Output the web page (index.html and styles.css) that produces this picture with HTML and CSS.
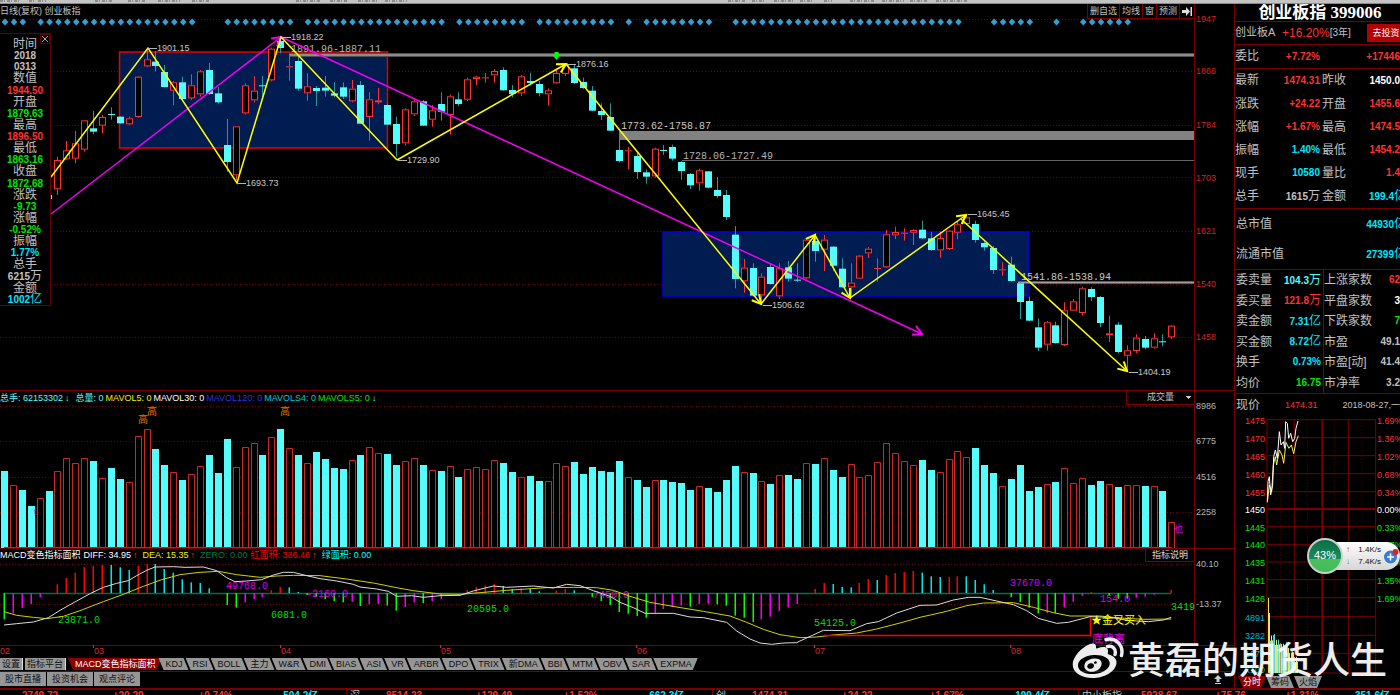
FILE: index.html
```html
<!DOCTYPE html>
<html lang="zh-CN">
<head>
<meta charset="utf-8">
<title>创业板指 399006</title>
<link rel="stylesheet" href="styles.css">
</head>
<body>
<div class="toolbar"><svg class="toolbar-marks" width="1000" height="3" aria-hidden="true"><path d="M0 1h20M29 1h6M38 1h8M95 1h18M128 1h18M158 1h22M192 1h18M296 1h24M330 1h18M358 1h20M385 1h22M728 1h18M752 1h14M774 1h20M800 1h14M824 1h8M850 1h24M882 1h22M910 1h18M936 1h32"/></svg></div>
<div class="workspace">
<main class="charts">
  <section class="kline">
    <header class="bar bar-top">
      <h2 class="chart-name">日线(复权) 创业板指</h2>
      <div class="chart-tools">
        <button type="button">删自选</button><button type="button">均线</button><button type="button">窗</button><button type="button">预测</button><button type="button" aria-label="移到最右"><svg width="10" height="9" viewBox="0 0 10 9"><path d="M0 3h4V0l4 4.500-4 4.500V6H0zM8.500 0H10v9H8.500z" fill="#ddd"/></svg></button>
      </div>
    </header>
    <svg class="plot" id="kline" viewBox="0 19 1234 371"></svg>
    <aside class="tip">
      <button type="button" class="tip-close" aria-label="关闭"><svg width="8" height="8" viewBox="0 0 8 8"><path d="M1 1l6 6M7 1l-6 6" stroke="#aaa"/></svg></button>
      <dl>
        <dt>时间</dt><dd>2018</dd><dd>0313</dd>
        <dt>数值</dt><dd class="up">1944.50</dd>
        <dt>开盘</dt><dd class="down">1879.63</dd>
        <dt>最高</dt><dd class="up">1896.50</dd>
        <dt>最低</dt><dd class="down">1863.16</dd>
        <dt>收盘</dt><dd class="down">1872.68</dd>
        <dt>涨跌</dt><dd class="down">-9.73</dd>
        <dt>涨幅</dt><dd class="down">-0.52%</dd>
        <dt>振幅</dt><dd class="info">1.77%</dd>
        <dt>总手</dt><dd>6215<i>万</i></dd>
        <dt>金额</dt><dd class="info">1002<i>亿</i></dd>
      </dl>
    </aside>
  </section>

  <section class="volume">
    <header class="bar bar-vol">
      <p class="legend"><span class="teal first">总手: 62153302<b>↓</b></span><span class="teal">总量: 0</span><span class="yellow">MAVOL5: 0</span><span class="white">MAVOL30: 0</span><span class="blue">MAVOL120: 0</span><span class="cyan">MAVOLS4: 0</span><span class="green">MAVOLS5: 0<b class="teal">↓</b></span></p>
      <select class="vol-select" aria-label="副图指标"><option>成交量</option></select>
    </header>
    <svg class="plot" id="volume" viewBox="0 405 1234 143"></svg>
  </section>

  <section class="macd">
    <header class="bar bar-macd">
      <p class="legend wide"><span class="white">MACD变色指标面积</span><span class="white">DIFF: 34.95<b class="up">↑</b></span><span class="yellow">DEA: 15.35<b class="up">↑</b></span><span class="dim">ZERO: 0.00</span><span class="red">红面积: 386.46<b class="up">↑</b></span><span class="aqua">绿面积: 0.00</span></p>
      <button type="button" class="help">指标说明</button>
    </header>
    <svg class="plot" id="macd" viewBox="0 562 1234 95"></svg>
  </section>

  <nav class="tabs">
    <button type="button" class="flat">设置</button><button type="button" class="flat">指标平台</button><button type="button" class="tab on">MACD变色指标面积</button><button type="button" class="tab">KDJ</button><button type="button" class="tab">RSI</button><button type="button" class="tab">BOLL</button><button type="button" class="tab">主力</button><button type="button" class="tab">W&amp;R</button><button type="button" class="tab">DMI</button><button type="button" class="tab">BIAS</button><button type="button" class="tab">ASI</button><button type="button" class="tab">VR</button><button type="button" class="tab">ARBR</button><button type="button" class="tab">DPO</button><button type="button" class="tab">TRIX</button><button type="button" class="tab">新DMA</button><button type="button" class="tab">BBI</button><button type="button" class="tab">MTM</button><button type="button" class="tab">OBV</button><button type="button" class="tab">SAR</button><button type="button" class="tab last">EXPMA</button>
  </nav>
  <nav class="links">
    <button type="button">股市直播</button><button type="button">投资机会</button><button type="button">观点评论</button>
    <svg class="raise" width="8" height="9" viewBox="0 0 8 9" aria-hidden="true"><path d="M4 0l4 4H5.500v3h-3V4H0zM1 8h6v1H1z" fill="#ccc"/></svg>
  </nav>
</main>

<aside class="quote">
  <h1>创业板指 399006</h1>
  <div class="fund"><span class="lab">创业板A</span><span class="rate">+16.20%</span><span class="term">[3年]</span><button type="button">去投资</button></div>
  <dl class="pair one"><dt>委比</dt><dd class="up">+7.72%</dd><dt></dt><dd class="up">+17446</dd></dl>
  <dl class="pair six">
    <dt>最新</dt><dd class="up">1474.31</dd><dt>昨收</dt><dd class="white">1450.0</dd>
    <dt>涨跌</dt><dd class="up">+24.22</dd><dt>开盘</dt><dd class="up">1455.6</dd>
    <dt>涨幅</dt><dd class="up">+1.67%</dd><dt>最高</dt><dd class="up">1474.5</dd>
    <dt>振幅</dt><dd class="info">1.40%</dd><dt>最低</dt><dd class="up">1454.2</dd>
    <dt>现手</dt><dd class="info">10580</dd><dt>量比</dt><dd class="up">1.4</dd>
    <dt>总手</dt><dd>1615<i>万</i></dd><dt>金额</dt><dd class="info cut">199.4<i>亿</i></dd>
  </dl>
  <dl class="caps"><dt>总市值</dt><dd class="info cut">44930<i>亿</i></dd><dt>流通市值</dt><dd class="info cut">27399<i>亿</i></dd></dl>
  <div class="depth">
    <dl>
      <dt>委卖量</dt><dd class="teal">104.3<i>万</i></dd>
      <dt>委买量</dt><dd class="up">121.8<i>万</i></dd>
      <dt>卖金额</dt><dd class="info">7.31<i>亿</i></dd>
      <dt>买金额</dt><dd class="info">8.72<i>亿</i></dd>
      <dt>换手</dt><dd class="info">0.73%</dd>
      <dt>均价</dt><dd class="down">16.75</dd>
    </dl>
    <dl>
      <dt>上涨家数</dt><dd class="up">62</dd>
      <dt>平盘家数</dt><dd class="white">3</dd>
      <dt>下跌家数</dt><dd class="down">7</dd>
      <dt>市盈</dt><dd>49.1</dd>
      <dt>市盈[动]</dt><dd>41.4</dd>
      <dt>市净率</dt><dd>3.2</dd>
    </dl>
  </div>
  <div class="now"><span class="lab">现价</span><span class="up">1474.31</span><span>2018-08-27,一</span></div>
  <svg class="plot" id="intraday" viewBox="1235 416 165 258"></svg>
  <nav class="tabs side"><button type="button" class="tab on">分时</button><button type="button" class="tab">筹码</button><button type="button" class="tab last">火焰</button></nav>
</aside>
</div>

<footer class="ticker">
  <div class="idx i1"><span></span><b>2749.72</b><b>+20.29</b><b>+0.74%</b><b class="info">504.2亿</b></div>
  <div class="idx i2"><span>深</span><b>8514.23</b><b>+129.49</b><b>+1.52%</b><b class="info">662.3亿</b></div>
  <div class="idx i2"><span>创</span><b>1474.31</b><b>+24.22</b><b>+1.67%</b><b class="info">199.4亿</b></div>
  <div class="idx i4"><span>中小板指</span><b>5928.67</b><b>+75.76</b><b>+1.31%</b><b class="info">351.6亿</b></div>
</footer>

<div class="netball">
  <div class="pill">
    <div class="speeds"><span><b class="s-up">↑</b>1.4K/s</span><span><b class="s-down">↓</b>7.4K/s</span></div>
    <svg width="17" height="17" viewBox="0 0 17 17" aria-hidden="true"><circle cx="7.500" cy="9" r="6.500" fill="#3a7bd5"/><path d="M7.500 5.500v7M4 9h7" stroke="#fff" stroke-width="1.600"/><circle cx="12.500" cy="4" r="3" fill="#d22"/></svg>
  </div>
  <div class="ball">43%</div>
</div>

<div class="mark">
  <svg width="52" height="42" viewBox="0 0 52 42" aria-hidden="true">
    <path fill="#fff" fill-rule="evenodd" d="M18 7c4-1.500 6.500 0 6 3.500-.1 1 .5 1.200 1.500.8 6-2.300 11-1.500 10.500 3.500-.1 1.300-.8 2.200.8 2.800C41 19 45 21.500 44.500 26 43.500 35 32 41 20.500 41 9 41 .7 35.500.7 27.500.7 20 9 10.500 18 7zM21 18C12 18.800 5.500 23.500 6 29c.5 5.300 7.500 8.800 16.500 8 9-.9 15.700-6 15.200-11.300C37.200 20.500 30 17.200 21 18z"/>
    <path fill="#fff" fill-rule="evenodd" d="M22.500 21.500c5.500-.5 8.300 3 6.700 7.300-1.700 4.800-7.700 7.200-12.700 5.400-4.600-1.700-5.300-5.800-2.500-9.400 2-2.200 5-3.100 8.500-3.300zM17.500 26.500c-1.800.7-2.700 2.500-2 4 .8 1.300 2.800 1.700 4.500.9 1.800-.8 2.500-2.700 1.700-4-.8-1.200-2.600-1.600-4.200-.9zM23 24.500c-.8.3-1.200 1.100-.9 1.700.3.600 1.200.8 1.900.4.700-.3 1-1.100.7-1.700-.3-.5-1-.7-1.700-.4z"/>
    <path d="M34 2.500c9-2.500 18 5 15.500 16M35.500 9.500c5-1.200 9 2.500 7.500 8" fill="none" stroke="#fff" stroke-width="3.400" stroke-linecap="round"/>
  </svg>
  <span>黄磊的期货人生</span>
</div>
<script src="charts.js"></script>
</body>
</html>
```
FILE: styles.css
```css
* { box-sizing: border-box; margin: 0; padding: 0; }
body {
  background: #000;
  color: #c0c0c0;
  font: 9px/1.2 "Liberation Sans", "Noto Sans CJK SC", sans-serif;
  overflow-x: hidden;
  position: relative;
}
button, select { font: inherit; color: inherit; background: none; border: 0; border-radius: 0; white-space: nowrap; }
i { font-style: normal; font-weight: 400; font-size: 12px; }
b { font-weight: 700; }
.up { color: #ff3232; }
.down, .green { color: #00e600; }
.info { color: #00e6ff; }
.teal { color: #54fcfc; }
.cyan { color: #00c8dc; }
.aqua { color: #00ffff; }
.yellow { color: #f0f000; }
.white { color: #fff; }
.blue { color: #3232dc; }
.dim { color: #00783c; }
.red { color: #ff0000; }

.toolbar { height: 4px; background: #c4c4c4; border-bottom: 1px solid #8a8a8a; overflow: hidden; }
.toolbar-marks { display: block; }
.toolbar-marks path { stroke: #555; stroke-width: 1; stroke-dasharray: 3 1 1 2; fill: none; }
.workspace { display: grid; grid-template-columns: minmax(0, 1fr) 166px; border-bottom: 2px solid #780000; }
.charts { min-width: 0; }
.plot { display: block; width: 100%; height: auto; overflow: visible; }
.plot text { white-space: pre; }

.kline { position: relative; }
.bar { display: flex; justify-content: space-between; align-items: center; padding-right: 39px; }
.bar-top { height: 15px; }
.chart-name { font-size: 9px; font-weight: 400; }
.chart-tools { display: flex; height: 15px; border-bottom: 1px solid #780000; border-right: 1px solid #780000; }
.chart-tools button { border-left: 1px solid #780000; padding: 0 2px; line-height: 14px; display: flex; align-items: center; }
.tip {
  position: absolute; left: 0; top: 29px; width: 51px; height: 273px;
  background: #000; border: solid #640000; border-width: 1px 1px 1px 0;
}
.tip-close { position: absolute; right: 0; top: 0; width: 10px; height: 10px; border: 1px solid #640000; line-height: 0; }
.tip dl { height: 100%; padding: 4px 0 0; display: flex; flex-direction: column; justify-content: space-between; text-align: center; }
.tip dt { font-size: 12px; line-height: 12px; }
.tip dd { font-size: 10px; line-height: 11px; font-weight: 700; }
.tip i { line-height: 11px; }

.volume, .macd { border-top: 1px solid #780000; }
.bar-vol { height: 14px; }
.bar-macd { height: 13px; }
.legend { display: flex; gap: 2px; white-space: nowrap; }
.legend b { padding-left: 2px; }
.first { padding-right: 4px; }
.wide { gap: 3px; }
.wide b { padding-right: 2px; }
.vol-select {
  appearance: none; width: 69px; height: 14px; padding-left: 20px; border: solid #780000; border-width: 0 1px 1px 1px;
  background: linear-gradient(#ccc, #ccc) 59px 5px / 5px 1px no-repeat, linear-gradient(#ccc, #ccc) 60px 6px / 3px 1px no-repeat, linear-gradient(#ccc, #ccc) 61px 7px / 1px 1px no-repeat;
}
.help { width: 50px; height: 13px; border: solid #780000; border-width: 0 1px 1px 1px; color: #ddd; }

.tabs { display: flex; height: 15px; align-items: flex-start; border-bottom: 1px solid #780000; }
.tabs button { height: 12px; line-height: 12px; background: #969696; color: #111; margin-top: 1px; }
.tabs .flat { padding: 0 2px; margin-right: 2px; border-right: 1px solid #ddd; }
.tabs .tab { padding: 0 6px 0 7px; margin-right: -3px; clip-path: polygon(0 0, calc(100% - 5px) 0, 100% 100%, 5px 100%); }
.tabs .last { clip-path: polygon(0 0, 100% 0, calc(100% - 5px) 100%, 5px 100%); }
.tabs .on { background: #8c0000; color: #fff; clip-path: polygon(0 0, 100% 0, calc(100% - 5px) 100%, 5px 100%); }
.links { display: flex; height: 15px; align-items: flex-start; }
.links button { width: 46px; height: 14px; margin-right: 1px; background: #969696; color: #111; }
.raise { margin: 3px 12px 0 auto; }

.quote { border-left: 1px solid #780000; overflow: hidden; min-width: 0; }
.quote > * { border-bottom: 1px solid #780000; }
.quote h1 { height: 18px; font: 700 17px/17px "Liberation Serif", "Noto Sans CJK SC", serif; color: #fff; text-align: center; white-space: nowrap; padding-left: 5px; }
.quote dt, .lab { font-size: 12px; white-space: nowrap; }
.quote dd { font-size: 10px; font-weight: 700; text-align: right; white-space: nowrap; }
.quote i { line-height: 12px; }
.quote .cut { margin-right: -6px; }
.fund { display: flex; align-items: center; height: 23px; }
.fund .lab { width: 47px; font-size: 11px; }
.rate { color: #ff3232; font-size: 12px; }
.term { font-size: 10px; flex: 1; }
.fund button { background: #b40000; color: #fff; height: 18px; padding: 0 0 0 5px; width: 33px; }
.pair { display: grid; grid-template-columns: 24px 61px 28px minmax(0, 1fr); align-items: center; }
.pair dt:nth-of-type(even) { padding-left: 2px; }
.one { height: 24px; }
.six { height: 140px; }
.caps { display: grid; grid-template-columns: auto 1fr; align-items: center; height: 61px; padding-left: 1px; }
.depth { display: grid; grid-template-columns: 88px minmax(0, 1fr); height: 124px; }
.depth dl { display: grid; grid-template-columns: auto 1fr; align-items: center; padding: 0 2px 0 1px; }
.depth dl + dl { border-left: 1px solid #780000; padding: 0; }
.quote .now { display: flex; align-items: center; justify-content: space-between; height: 22px; border: 0; padding-left: 1px; white-space: nowrap; }
.quote .plot { border: 0; }
.quote .side { height: 13px; border: 0; padding-left: 3px; margin-top: 1px; }
.side .tab { margin-right: 0; padding: 0 5px; }

.ticker { display: grid; grid-template-columns: 347fr 366fr 366fr 321fr; height: 7px; overflow: hidden; line-height: 12px; font-size: 10px; color: #c0c0c0; }
.idx { display: grid; white-space: nowrap; border-right: 1px solid #780000; padding-left: 3px; }
.idx b { color: #ff3232; }
.idx .info { color: #00e6ff; }
.i1 { grid-template-columns: 19fr 91fr 86fr 85fr 63fr; }
.i2 { grid-template-columns: 36fr 90fr 88fr 86fr 63fr; }
.i4 { grid-template-columns: 59fr 74fr 70fr 70fr 45fr; border-right: 0; }

.netball { position: absolute; right: 0; top: 538px; width: 93px; height: 36px; }
.ball {
  position: absolute; left: 0; top: 0; width: 36px; height: 36px; border-radius: 50%;
  border: 2px solid #c8d2cc; background: linear-gradient(#0a6e46 0, #1d8a58 58%, #48c25a 58%, #46b95a 100%);
  color: #fff; font-size: 11px; line-height: 31px; text-align: center;
}
.pill {
  position: absolute; left: 18px; right: 0; top: 4px; height: 28px; border-radius: 0 14px 14px 0;
  background: linear-gradient(#fff, #d6d6d6); display: flex; align-items: center; justify-content: flex-end;
}
.speeds { display: flex; flex-direction: column; gap: 2px; font-size: 8px; line-height: 10px; color: #111; width: 35px; margin-right: 2px; }
.speeds span { display: flex; justify-content: space-between; }
.s-up { color: #e03020; }
.s-down { color: #2a9a50; }

.mark { position: absolute; right: 13px; top: 636px; display: flex; align-items: center; gap: 4px; color: #fff; opacity: .93; font: 500 37px/44px "Noto Sans CJK SC", sans-serif; white-space: nowrap; }
```
FILE: charts.js
```js
const STEP = 8.911;
const cx = i => 4 + STEP * i;
const RED = '#ff3232', CYAN = '#54fcfc', GRID = '#6e0000';
const rect = (x, y, w, h, fill, stroke, sw = 1) =>
  `<rect x="${x}" y="${y}" width="${w}" height="${h}" fill="${fill}"${stroke ? ` stroke="${stroke}" stroke-width="${sw}"` : ''}/>`;
const line = (x1, y1, x2, y2, c, w = 1, dash = '') =>
  `<path d="M${x1} ${y1}L${x2} ${y2}" stroke="${c}" stroke-width="${w}"${dash ? ` stroke-dasharray="${dash}"` : ''} fill="none"/>`;
const text = (x, y, s, c, size = 9, extra = '') =>
  `<text x="${x}" y="${y}" fill="${c}" font-size="${size}" ${extra}>${s}</text>`;
const MONO = 'font-family="Liberation Mono, monospace"';
const poly = (pts, c, w = 1) => `<polyline points="${pts}" fill="none" stroke="${c}" stroke-width="${w}"/>`;

/* rows: colour, high, body top, body bottom, low; three units to the pixel */
const candles = `c585 585 597 597|r470 480 568 585|r423 451 478 480|r393 430 476 490|r360 361 449 455|c333 385 395 403|r345 351 377 400|c322 342 344 359|c349 350 370 371|r350 355 373 376|r228 230 351 353|r147 178 199 202|c153 185 198 215|c195 216 261 262|r243 247 272 316|c230 247 297 302|r223 256 295 300|r210 214 283 290|c189 210 282 284|c262 280 307 311|c357 435 486 515|r378 379 526 540|r250 256 340 344|r229 272 301 307|c228 256 258 300|r143 146 241 244|c110 123 144 160|r165 199 202 242|c165 183 266 272|r220 259 280 302|c258 264 273 318|c228 263 272 290|c247 280 287 292|c247 262 290 297|r240 266 304 307|c243 255 371 372|r277 298 351 422|r264 301 307 313|c310 315 374 375|c350 372 432 470|r325 328 430 437|r298 304 343 348|c300 304 377 378|r315 331 359 380|c277 312 335 362|r284 289 345 404|c277 298 312 318|r233 238 299 303|r227 230 237 255|r219 232 234 248|r207 213 226 248|c202 210 271 272|c255 270 282 292|r225 229 280 288|c218 243 249 256|c243 252 279 289|r265 271 283 317|r205 219 250 252|r190 193 222 228|c191 205 249 252|c233 246 264 267|c258 272 332 333|c310 333 345 360|c310 351 392 393|c392 450 483 487|r441 451 453 507|c459 468 516 537|c508 517 530 551|r443 446 529 533|c435 450 452 465|c434 441 476 482|c484 486 513 539|c519 522 556 567|r506 511 550 572|c513 514 563 565|c531 570 588 594|c570 585 651 660|c678 704 837 865|r777 803 844 878|c790 804 887 890|r820 830 886 912|c790 801 852 853|r790 805 889 897|c783 802 836 845|c790 839 841 846|r715 719 835 838|c703 723 753 785|r705 719 749 813|c739 740 797 812|c775 806 862 863|r790 848 862 890|r765 767 836 837|r741 746 760 774|r775 804 806 845|r690 703 802 804|r680 696 706 717|r685 698 700 722|r688 690 698 735|c662 689 715 717|c695 715 750 752|r695 714 751 773|r690 692 747 750|r662 673 698 718|r643 652 672 675|c662 672 720 728|c725 729 742 752|c738 744 810 822|r787 808 811 827|c770 794 843 845|c843 850 906 957|c890 903 962 963|c955 982 1043 1053|r963 967 1034 1052|c965 976 1029 1031|r907 931 1035 1038|r897 904 932 933|r861 865 939 946|c862 867 891 903|c888 891 969 981|r947 1000 1006 1026|c966 974 1056 1061|r1036 1051 1067 1115|r1003 1013 1053 1059|c1008 1017 1043 1048|r1000 1015 1043 1046|c1003 1024 1026 1038|r975 977 1012 1017`
  .split('|').map(s => [s[0], ...s.slice(1).split(' ').map(v => v / 3)]);

const axis = rows => rows.map(([y, s, c]) => text(1196, y + 3, s, c)).join('');
const dots = (ys, x2 = 1194) => ys.map(y => line(0, y, x2, y, GRID, 1, '1 2')).join('');
const frame = (y1, y2) => line(1194.5, y1, 1194.5, y2, '#780000');

function arrow(x1, y1, x2, y2, c) {
  const a = Math.atan2(y2 - y1, x2 - x1);
  const p = d => `${x2 - 10 * Math.cos(a + d)},${y2 - 10 * Math.sin(a + d)}`;
  return line(x1, y1, x2, y2, c, 1.5) + poly(`${p(.5)} ${x2},${y2} ${p(-.5)}`, c, 2);
}

function drawKline() {
  let s = dots([19.5, 71.5, 125.5, 177.5, 231.5, 284.5, 337.5]) + frame(19, 390);
  s += axis([[19, 1947], [71, 1866], [125, 1784], [178, 1703], [231, 1621], [284, 1540], [337, 1458]].map(r => [...r, '#d22323']));
  const runs = [[0, 2], [4, 21], [25, 32], [34, 49], [51, 58], [60, 68], [70, 70], [72, 79], [82, 107], [111, 115], [118, 118], [121, 126]];
  for (const [a, b] of runs) for (let i = a; i <= b; i++) {
    const x = cx(i) + 1;
    s += `<path d="M${x} 18.500l3.300 3.500l-3.300 3.500l-3.300-3.500z" fill="#32a0d2"/>`;
  }
  s += rect(119.5, 52, 268, 96, '#001c50', '#e60000', 1.5) + rect(663, 232, 366, 64, '#001c50', '#0000e6', 1.5);
  s += rect(289, 53, 905, 4, '#505050') + rect(289, 54, 905, 2, '#8c8c8c') + rect(619, 131, 575, 9, '#828282') +
    line(682, 160.5, 1194, 160.5, '#646464') + rect(1018, 281, 176, 3, '#5a5a5a') + rect(1018, 282, 176, 1, '#a0a0a0');
  s += text(291, 52, '1891.96-1887.11', '#b4b4b4', 10, MONO) + text(621, 129, '1773.62-1758.87', '#c8c8c8', 10, MONO) +
    text(683, 159, '1728.06-1727.49', '#b4b4b4', 10, MONO) + text(1021, 280, '1541.86-1538.94', '#c8c8c8', 10, MONO);
  candles.forEach(([k, hi, top, bot, lo], n) => {
    const x = Math.round(cx(n + 5)) + .5, h = bot - top;
    if (n === 0) { s += rect(51, hi, 1, 4, CYAN); return; }
    if (k === 'c') {
      s += line(x, hi, x, lo, '#2d9696') + rect(x - 3.5, top, 7, Math.max(h, 1), CYAN);
    } else {
      s += line(x, hi, x, top, RED) + line(x, bot, x, lo, RED);
      s += h < 2 ? rect(x - 3.5, top, 7, 1, RED) : rect(x - 3, top + .5, 6, Math.max(h - 1, 1), '#000', RED);
    }
  });
  s += arrow(51, 214, 281, 37, '#f000f0') + arrow(281, 37, 922, 334, '#f000f0');
  s += poly('51,177 148,48 237,183 281,37 397,160', '#ffff00', 1.5);
  s += arrow(397, 160, 566, 64, '#ffff00') + arrow(566, 64, 761, 304, '#ffff00') + arrow(761, 304, 815, 235, '#ffff00') +
    arrow(815, 235, 850, 298, '#ffff00') + arrow(850, 298, 966, 215, '#ffff00') + arrow(961, 219, 1127, 371, '#ffff00');
  for (const [x, y, v] of [[157, 48, '1901.15'], [291, 37, '1918.22'], [246, 183, '1693.73'], [407, 160, '1729.90'], [576, 64, '1876.16'], [772, 305, '1506.62'], [977, 214, '1645.45'], [1138, 372, '1404.19']])
    s += line(x - 9, y + .5, x, y + .5, '#b4b4b4') + text(x, y + 3, v, '#c8c8c8');
  s += '<path d="M554.500 52h4v3h2l-4 5-4-5h2z" fill="#00ff00"/>';
  document.getElementById('kline').innerHTML = s;
}

const volumes = 'c258 r300 c315 c364 r338 c319 r258 r220 r235 r220 c228 r280 c249 c282 r292 r154 r133 c193 c241 r262 c286 r268 r244 c210 c264 c162 r247 r187 r175 c210 r156 c132 r190 c210 r234 c202 c222 c249 c253 r226 c210 r187 r205 c208 c240 r228 r220 c241 r256 c259 r244 c276 r252 r247 r252 r226 c235 c262 r277 c273 c288 r289 r235 r243 c231 c267 c246 c259 c262 c228 r277 c285 c306 r286 c285 c292 c295 c316 r304 c309 c320 c285 c243 r260 c264 r287 c297 r271 c270 c282 r234 c237 r220 c255 c277 r238 r277 r269 r232 r175 r205 r229 r241 c226 c255 r262 r223 r199 r217 c190 c241 c264 r304 c282 c240 c318 c306 r296 c292 r250 r295 r280 c300 c289 r296 c306 r301 r301 c304 r304 c319 r412'.split(' ');

function drawVolume() {
  let s = dots([406.5, 441.5, 477.5, 512.5]) + frame(405, 548);
  s += axis([[406, 8986, '#b4b4b4'], [441, 6775, '#b4b4b4'], [477, 4516, '#b4b4b4'], [512, 2258, '#b4b4b4']]);
  volumes.forEach((v, i) => {
    const x = Math.round(cx(i)) + .5, y = Math.round(385 + v.slice(1) / 3);
    s += v[0] === 'c' ? rect(x - 3.5, y, 7, 548 - y, CYAN)
      : `<path d="M${x - 3} 548V${y + .5}h6V548" fill="#000" stroke="#c82828"/>`;
  });
  s += line(4, 547.5, 1172, 547.5, '#008c00');
  s += text(138, 423, '高', '#e67800', 10) + text(147, 415, '高', '#e67800', 10) + text(280, 415, '高', '#e67800', 10) +
    text(1174, 532, '也', '#e600e6', 9) + text(34, 515, 't', '#c800c8', 9);
  document.getElementById('volume').innerHTML = s;
}

const macdBars = 'g703 m685 m669 m657 m636 - r598 r579 r563 r546 r543 r540 c540 c547 c555 r543 r537 c537 c552 c563 c583 c592 c594 c610 - g660 g668 m652 m642 m636 r616 r606 c607 c621 g630 g636 g642 g648 g652 m650 g663 m658 m657 g662 g677 m666 m652 g654 m648 m642 - - r615 r606 r601 r597 c603 c612 r610 c612 c619 - r617 r612 c616 - g636 g648 g660 g681 g686 g693 g698 m684 m672 m666 m662 g665 m657 m656 g658 g662 g692 g698 g711 m703 m695 m678 m667 m657 m626 r612 r594 c597 c606 c607 r594 r582 c585 r570 r564 r561 r558 c563 c574 c576 r576 r574 c574 c585 c598 c615 - g636 g651 g668 g685 m684 g684 m667 m650 m632 r621 - g630 g641 g640 m638 m635 m629 - r615'.split(' ');
const diff = '12,720 50,716 100,711 145,698 180,676 230,648 270,626 310,607 350,595 385,587 410,572 440,556 465,546 520,545 555,547 610,546 650,557 680,578 705,590 740,588 785,584 820,570 850,562 880,562 920,572 960,581 1010,588 1060,598 1080,606 1130,612 1165,619 1190,634 1235,632 1270,637 1320,632 1380,631 1420,618 1480,603 1520,607 1600,603 1660,609 1700,598 1740,602 1780,617 1830,634 1860,652 1900,668 1935,685 2020,685 2070,696 2110,698 2180,712 2210,738 2250,762 2280,774 2315,778 2350,774 2390,773 2400,768 2435,752 2470,736 2550,737 2600,716 2635,710 2690,684 2760,661 2810,660 2860,645 2905,637 2940,637 2990,648 3040,659 3080,677 3115,700 3170,715 3205,712 3270,695 3330,697 3390,707 3445,710 3490,705 3514,697';
const dea = '12,680 50,691 100,697 140,701 190,694 240,677 310,650 370,628 430,604 485,584 540,569 600,562 655,559 710,569 780,577 830,573 880,571 960,572 1040,582 1120,594 1200,610 1240,617 1320,627 1380,628 1440,623 1520,616 1640,608 1720,607 1790,608 1840,616 1890,634 1950,652 2030,666 2110,679 2190,693 2240,712 2290,733 2340,749 2400,758 2450,756 2500,750 2570,744 2630,732 2700,714 2760,697 2840,679 2900,662 2950,654 3040,653 3100,667 3160,683 3210,693 3300,693 3360,699 3430,703 3514,702';
const thirds = (pts, x0) => pts.split(' ').map(p => { const [x, y] = p.split(','); return `${x0 + x / 3},${385 + y / 3}`; }).join(' ');

function drawMacd() {
  let s = dots([564.5, 604.5]) + frame(562, 645) + line(0, 645.5, 1234, 645.5, '#780000');
  s += axis([[564, '40.10', '#b4b4b4'], [604, '-13.37', '#b4b4b4']]);
  s += line(4, 593.5, 1171, 593.5, '#006e46', 1.5);
  const tint = { g: '#00ff00', m: '#f000f0', r: '#ff0000', c: '#00e6e6' };
  macdBars.forEach((v, i) => {
    if (v === '-') return;
    const x = Math.round(cx(i)), y = 385 + v.slice(1) / 3;
    s += rect(x - .5, Math.min(y, 593), 1.5, Math.abs(y - 593), tint[v[0]]);
  });
  for (const [x, y, v, c] of [[58, 623, '23871.0', 'g'], [226, 589, '49768.0', 'm'], [271, 618, '6081.0', 'g'], [306, 597, '-2160.0', 'm'], [467, 612, '20595.0', 'g'], [593, 598, '7450.0', 'm'], [814, 626, '54125.0', 'g'], [1010, 586, '37670.0', 'm'], [1100, 602, '154.0', 'm'], [1171, 610, '3419', 'g']])
    s += text(x, y, v, c === 'g' ? '#00dc00' : '#dc00dc', 10, MONO);
  s += poly(thirds(dea, 0), '#d2d200') + poly(thirds(diff, 0), '#dcdcdc');
  s += poly('824,635.5 1090.5,635.5 1090.5,617', '#ff0000', 1.5);
  s += text(1091, 624, '★金叉买入', '#ffff00', 11) + text(1092, 643, '底背离', '#e600e6', 11);
  for (const [x, m] of [[0, '02'], [94, '03'], [281, '04'], [441, '05'], [637, '06'], [815, '07'], [1011, '08']])
    s += text(x, 654, m, '#dc2828') + (x ? line(x - .5, 645, x - .5, 648, '#dc2828') : '');
  document.getElementById('macd').innerHTML = s;
}

function drawIntraday() {
  const X = u => 1190 + u / 3, Y = v => 385 + v / 3;
  const ys = [104, 158, 212, 266, 320, 372, 425, 478, 531, 584, 638, 695, 751, 805, 864];
  let s = ys.map((v, i) => line(X(231), Y(v), X(557), Y(v), '#780000', i === 5 ? 2 : 1)).join('');
  for (const u of [231, 313, 397, 475, 557]) s += line(X(u), Y(104), X(u), Y(864), '#780000', u === 397 ? 2 : 1);
  for (const u of [272, 352, 434, 516]) s += line(X(u), Y(104), X(u), Y(864), '#5a0000', 1, '1 2');
  const left = ['1475', '1470', '1465', '1460', '1455', '1450', '1445', '1440', '1435', '1431', '1426', '4891', '3282', '1673', 'X100'];
  const right = ['1.69%', '1.36%', '1.02%', '0.68%', '0.34%', '0.00%', '0.33%', '0.67%', '1.01%', '1.35%', '1.69%'];
  const tone = i => i < 5 ? RED : i === 5 ? '#fff' : i < 11 ? '#00e600' : '#00b4c8';
  left.forEach((v, i) => { s += text(1265, Y(ys[i]) + (i === 14 ? 0 : 4), v, tone(i), 9, 'text-anchor="end"'); });
  right.forEach((v, i) => { s += text(1377, Y(ys[i]) + 4, v, tone(i)); });
  for (let k = 0; k < 30; k++) {
    const h = k === 0 ? 75 : k === 1 ? 60 : 42 - k * .85 - (k * 7 % 5) * 2 + (k % 6 === 0 ? 6 : 0);
    s += rect(1268 + k, 673 - h, 1, h, k % 4 === 2 ? '#54dcdc' : k % 7 === 5 ? '#c89650' : '#e6e664');
  }
  s += poly(thirds('232,352 238,300 245,320 250,240 256,215 260,240 268,195 276,210 281,235 288,172 297,190 304,180 311,206 318,170 325,152', 1190), '#f0f064');
  s += poly(thirds('232,350 234,290 238,275 242,330 248,300 251,215 256,195 262,220 268,140 273,180 280,170 284,190 287,110 292,115 296,160 302,145 308,170 314,160 318,130 324,108', 1190), '#fff');
  document.getElementById('intraday').innerHTML = s;
}

drawKline();
drawVolume();
drawMacd();
drawIntraday();
```
